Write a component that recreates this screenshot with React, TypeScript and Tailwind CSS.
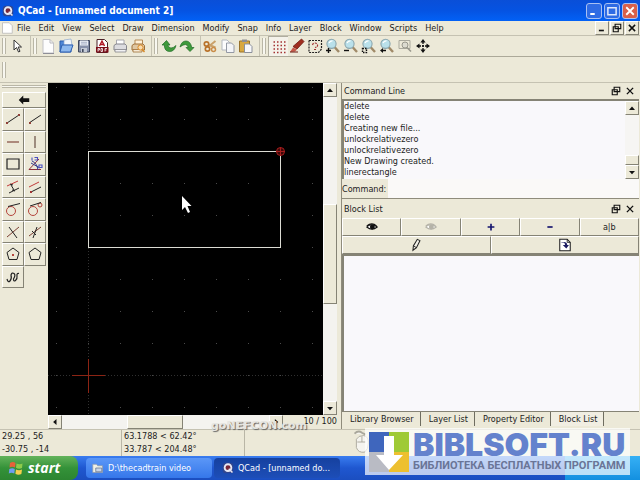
import React, { useState } from "react";

const menus = [
  "File",
  "Edit",
  "View",
  "Select",
  "Draw",
  "Dimension",
  "Modify",
  "Snap",
  "Info",
  "Layer",
  "Block",
  "Window",
  "Scripts",
  "Help",
];

const history = [
  "delete",
  "delete",
  "Creating new file...",
  "unlockrelativezero",
  "unlockrelativezero",
  "New Drawing created.",
  "linerectangle",
];

const tabs = ["Library Browser", "Layer List", "Property Editor", "Block List"];

interface IconProps {
  children: React.ReactNode;
  className?: string;
}

const Icon: React.FC<IconProps> = ({ children, className = "size-4" }) => (
  <svg viewBox="0 0 16 16" className={`${className} shrink-0`} fill="none" aria-hidden="true">
    {children}
  </svg>
);

const Magnifier: React.FC<{ children?: React.ReactNode }> = ({ children }) => (
  <Icon>
    <path d="M9.5 9 L14 14" stroke="#a08a68" strokeWidth="2.4" />
    <circle cx="6.5" cy="5.8" r="4.6" fill="#b9e0ea" stroke="#8aa6ae" strokeWidth="1.1" />
    <path d="M4 5 Q5 2.6 7.5 2.8" stroke="#fff" strokeWidth="1.3" />
    {children}
  </Icon>
);

const QCadLogo = () => (
  <Icon className="size-3">
    <rect x="1" y="1" width="14" height="14" rx="4" fill="#31468f" />
    <circle cx="8" cy="7.5" r="4.5" stroke="#e8e8f4" strokeWidth="2.4" fill="#7a2638" />
    <path d="M9 9 L14 14" stroke="#e8e8f4" strokeWidth="2" />
  </Icon>
);

const pageIcon = (
  <Icon>
    <path d="M3 1.5h7l3.5 3.5v10H3z" fill="#fdfdfd" stroke="#c4c4c8" />
    <path d="M10 1.5V5h3.5" stroke="#b9b9bd" />
    <path d="M3 15.5h11" stroke="#8f8f98" />
  </Icon>
);

const fileTools = [
  { name: "New", icon: pageIcon },
  {
    name: "Open",
    icon: (
      <Icon>
        <path d="M2 3h5l1 2h5v9H2z" fill="#4e86d6" stroke="#2d5fb0" />
        <path d="M6 2l7-1 1 6H6z" fill="#f2f6fc" stroke="#8da6cc" strokeWidth=".7" />
        <path d="M4 7h11l-2.5 7H2z" fill="#8db8ee" stroke="#2d5fb0" />
      </Icon>
    ),
  },
  {
    name: "Save",
    icon: (
      <Icon>
        <path d="M2.5 2.5h11v11.5h-11z" fill="#8791aa" stroke="#3f475c" />
        <path d="M4 2.5h8v5H4z" fill="#e9edf5" />
        <path d="M5 4.3h6M5 6h6" stroke="#9aa5bd" strokeWidth=".8" />
        <path d="M5 10h6v4H5z" fill="#c4cad6" />
        <path d="M6 11h1.6v3H6z" fill="#3f475c" />
      </Icon>
    ),
  },
  {
    name: "Export PDF",
    icon: (
      <Icon>
        <path d="M3 1.5h7.5L13.5 4.5v10H3z" fill="#fff" stroke="#4b2328" />
        <path d="M5.5 8 L8 3l2.5 5M6 6.5h4.5" stroke="#b01622" strokeWidth="1.4" />
        <path d="M2 9h12.5v5.5H2z" fill="#7b0c16" />
        <path d="M4 13.5v-3h1.5v1.5H4M7 10.5v3h1.5v-3zM11 13.5v-3h2M11 12h1.5" stroke="#fff" strokeWidth=".8" />
      </Icon>
    ),
  },
  {
    name: "Print",
    icon: (
      <Icon>
        <path d="M4.5 7V2h7.5v5" fill="#fff" stroke="#a8a8ae" />
        <path d="M2 7.5 L4 6h9l1.5 1.5V12H2z" fill="#dcdce0" stroke="#85858c" />
        <path d="M3 11.5h11v2.5H3z" fill="#f1f1f3" stroke="#85858c" strokeWidth=".8" />
      </Icon>
    ),
  },
  {
    name: "Print preview",
    icon: (
      <Icon>
        <path d="M5 7V2h7.5v5" fill="#fff1d8" stroke="#b48a56" />
        <path d="M2 7.5 L4 6h9l1.5 1.5V12H2z" fill="#dfc7a2" stroke="#a07038" />
        <path d="M3 11.5h9v2.5H3z" fill="#f6ead6" stroke="#a07038" strokeWidth=".8" />
        <circle cx="10.5" cy="9.5" r="2.6" fill="#f9dcb0" stroke="#d98a26" />
        <path d="M12.3 11.5l2.2 2.5" stroke="#d98a26" strokeWidth="1.4" />
      </Icon>
    ),
  },
];

const historyTools = [
  {
    name: "Undo",
    icon: (
      <Icon>
        <path
          d="M1 7 L5.5 2.5 L9 7H6.8q.8 3 3.2 3t5-2.5q-1.500 6-6.500 6T3.3 7z"
          fill="#3f9a3c"
          stroke="#1f6b25"
          strokeWidth=".7"
        />
      </Icon>
    ),
  },
  {
    name: "Redo",
    icon: (
      <Icon>
        <path
          d="M15 9.5 L11 13.5 L7 9.5h2.3q-.8-3-3-3T1 9q1.5-6 6-6t5.7 6.5z"
          fill="#3f9a3c"
          stroke="#1f6b25"
          strokeWidth=".7"
        />
      </Icon>
    ),
  },
];

const clipTools = [
  {
    name: "Cut",
    icon: (
      <Icon>
        <path d="M13.5 3 L6 9M13.5 9.5 L6 6.5" stroke="#c9a06a" strokeWidth="2" />
        <circle cx="4.5" cy="6" r="2.2" stroke="#b9722a" strokeWidth="1.7" />
        <circle cx="5.5" cy="11" r="2.2" stroke="#b9722a" strokeWidth="1.7" />
        <circle cx="11.5" cy="11.5" r="2" stroke="#c98d4a" strokeWidth="1.5" />
      </Icon>
    ),
  },
  {
    name: "Copy",
    icon: (
      <Icon>
        <path d="M2 2h5l2.5 2.5V12H2z" fill="#fcfcfd" stroke="#b4b8c0" />
        <path d="M6.5 5h5l2.5 2.5V14.5H6.5z" fill="#f4f5f8" stroke="#9499a4" />
      </Icon>
    ),
  },
  {
    name: "Paste",
    icon: (
      <Icon>
        <path d="M1.5 3h10v11h-10z" fill="#d9a83f" stroke="#98722a" />
        <path d="M4 1.5h5V4H4z" fill="#8e8e92" />
        <path d="M6.5 6h5l2.5 2.5V14.5H6.5z" fill="#f8f8fa" stroke="#8b909c" />
      </Icon>
    ),
  },
];

const viewTools = [
  {
    name: "Grid",
    icon: (
      <Icon>
        <path
          d="M2.5 3h12M2.5 6.500h12M2.5 10h12M2.5 13.500h12"
          stroke="#a33232"
          strokeWidth="1.5"
          strokeDasharray="1.5 2"
        />
      </Icon>
    ),
  },
  {
    name: "Edit",
    icon: (
      <Icon>
        <path d="M12.500 1l2.500 2.500-7 7.500-4-2.500z" fill="#a02e20" stroke="#6d1a12" strokeWidth=".8" />
        <path d="M4 9.5l4 2-2 2-5 .5z" fill="#c7594a" />
        <path d="M1 14h8" stroke="#6d1a12" />
      </Icon>
    ),
  },
  {
    name: "Draft",
    icon: (
      <Icon>
        <path d="M2 2.5h12.500v8.500l-3 3.500H2z" stroke="#222" strokeDasharray="2 1" strokeWidth="1.2" />
        <path
          d="M5.5 7q.5-2 2.5-2t2.5 2-2.5 2.5M7 11.500h2"
          stroke="#a33232"
          strokeWidth="1.2"
          strokeDasharray="2 1"
        />
      </Icon>
    ),
  },
  {
    name: "Zoom in",
    icon: (
      <Magnifier>
        <path d="M1 12.500h5M3.5 10v5" stroke="#111" strokeWidth="1.400" />
      </Magnifier>
    ),
  },
  {
    name: "Zoom out",
    icon: (
      <Magnifier>
        <path d="M1 12.500h5" stroke="#111" strokeWidth="1.400" />
      </Magnifier>
    ),
  },
  {
    name: "Auto zoom",
    icon: (
      <Magnifier>
        <path d="M1.500 10.500h4v4h-4z" stroke="#111" strokeWidth="1.400" strokeDasharray="1.500 1" />
      </Magnifier>
    ),
  },
  {
    name: "Previous view",
    icon: (
      <Magnifier>
        <path d="M1 12.500 L4 10v5z" fill="#111" />
        <path d="M3 12.500h4" stroke="#111" strokeWidth="1.500" />
      </Magnifier>
    ),
  },
  {
    name: "Zoom window",
    icon: (
      <Icon>
        <path d="M2 2.500h11v8H2z" stroke="#aaa99d" />
        <circle cx="8" cy="7" r="3" fill="#dcdbd0" stroke="#98978c" />
        <path d="M10 9.500l4 4" stroke="#98978c" strokeWidth="1.600" />
      </Icon>
    ),
  },
  {
    name: "Pan",
    icon: (
      <Icon>
        <path
          d="M8 1l2.600 3.500H5.400zM8 15l2.600-3.500H5.400zM1 8l3.500-2.600v5.200zM15 8l-3.500-2.600v5.200z"
          fill="#111"
        />
        <path d="M8 4v8M4 8h8" stroke="#111" strokeWidth="1.300" strokeDasharray="2 1" />
      </Icon>
    ),
  },
];

const lineTools = [
  {
    name: "Line",
    icon: (
      <>
        <path d="M2 12 L14 4" stroke="#222" />
        <path d="M1 11h2v2H1zM13 3h2v2h-2z" fill="#8f4038" />
      </>
    ),
  },
  {
    name: "Line angle",
    icon: (
      <>
        <path d="M2 12 L14 4" stroke="#222" />
        <path d="M2 11h2v2H2z" fill="#8f4038" />
      </>
    ),
  },
  { name: "Horizontal", icon: <path d="M2 8h12" stroke="#7b3d32" strokeWidth="1.100" /> },
  { name: "Vertical", icon: <path d="M8 2v12" stroke="#5d4038" strokeWidth="1.100" /> },
  { name: "Rectangle", icon: <path d="M2 3h12v10H2z" stroke="#222" strokeWidth="1.200" /> },
  {
    name: "Bisector",
    icon: (
      <>
        <path d="M2 13.500 L12 3M2 13.500h12" stroke="#8e2f3a" />
        <path d="M5 5q5 2 6 9M4 7l9 5" stroke="#343a8d" />
        <path d="M5 1.500v3M7.500 1.500h3v2.500h-3M12 9h3v2.500h-3z" stroke="#4a4fc0" strokeWidth="1.100" />
      </>
    ),
  },
  {
    name: "Parallel with distance",
    icon: (
      <>
        <path d="M2 7 L13 2" stroke="#c03a3a" />
        <path d="M4 14 L14 9M6 6l3 5" stroke="#222" />
        <path d="M5 5l3 1M7 11l3 1" stroke="#222" />
      </>
    ),
  },
  {
    name: "Parallel through point",
    icon: (
      <>
        <path d="M2 8 L12 3" stroke="#c03a3a" />
        <path d="M4 13 L14 8" stroke="#222" />
        <path d="M3 12h2v2H3z" fill="#a33232" />
      </>
    ),
  },
  {
    name: "Tangent",
    icon: (
      <>
        <circle cx="6" cy="10" r="4.500" stroke="#b4443c" />
        <path d="M3 5.500 L15 2.500" stroke="#222" />
      </>
    ),
  },
  {
    name: "Tangent two circles",
    icon: (
      <>
        <circle cx="6" cy="10" r="4.500" stroke="#b4443c" />
        <circle cx="13" cy="4" r="2" stroke="#b4443c" />
        <path d="M3 5 L14 1.500" stroke="#222" />
      </>
    ),
  },
  {
    name: "Orthogonal",
    icon: (
      <>
        <path d="M2 13 L14 3" stroke="#7b3d32" />
        <path d="M4 3l8 11" stroke="#222" />
      </>
    ),
  },
  {
    name: "Relative angle",
    icon: (
      <>
        <path d="M2 12 L14 3" stroke="#7b3d32" />
        <path d="M10 3 L6 14M5 7l4 4" stroke="#222" />
      </>
    ),
  },
  {
    name: "Polygon center",
    icon: (
      <>
        <path d="M8 2 L14 6.500 L12 13.500H4L2 6.500z" stroke="#222" />
        <path d="M7 8h2v2H7z" fill="#b4443c" />
      </>
    ),
  },
  { name: "Polygon corner", icon: <path d="M8 2 L14 6.500 L12 13.500H4L2 6.500z" stroke="#222" /> },
  {
    name: "Freehand",
    icon: (
      <path
        d="M2 10q1 4 3 2t1-6q1-3 3-1.500t-.5 5.500q0 3 2 1.500t1.500-4.500 2-2.500"
        stroke="#222"
        strokeWidth="1.200"
      />
    ),
  },
];

const eye = (
  <>
    <path d="M1 8q6-6 14 0-7 6-14 0z" fill="#fff" stroke="currentColor" strokeWidth="1.400" />
    <circle cx="8.500" cy="8" r="3.300" fill="currentColor" />
    <path d="M1 6.500q7-5.500 13 0" stroke="currentColor" strokeWidth="1.600" />
  </>
);

const Handle = () => <span className="mx-0.5 h-4 w-1 border-x border-[#b9b6a6] bg-[#f8f7f0]" />;

const Separator = () => <span className="h-5 w-px bg-[#c5c2b2]" />;

const ToolButton: React.FC<{ name: string; children: React.ReactNode; pressed?: boolean }> = ({
  name,
  children,
  pressed,
}) => (
  <button
    type="button"
    aria-label={name}
    className={`flex h-5 items-center justify-center ${
      pressed ? "w-5 border-t border-l border-[#b0ad9e] bg-[#f4f2ea]" : "w-[18px]"
    }`}
  >
    {children}
  </button>
);

const bevel = "border border-t-white border-l-white border-r-[#858375] border-b-[#858375] bg-[#ece9d8]";

const ScrollButton: React.FC<{ name: string; d: string }> = ({ name, d }) => (
  <button type="button" aria-label={name} className={`flex size-3.5 shrink-0 items-center justify-center ${bevel}`}>
    <Icon className="size-3">
      <path d={d} fill="#111" />
    </Icon>
  </button>
);

const arrows = {
  up: "M8 6l4 4.500h-8z",
  down: "M8 11l4-4.500h-8z",
  left: "M5.500 8l4.500-4v8z",
  right: "M11 8L6.500 4v8z",
};

const WindowGlyphs = () => (
  <span className="flex items-center gap-1 pr-1">
    <button type="button" aria-label="Float" className="size-2.5">
      <Icon className="size-2.5">
        <path d="M5 2h9v7h-9zM2 6h8v8H2z" stroke="#111" strokeWidth="1.800" fill="#ece9d8" />
      </Icon>
    </button>
    <button type="button" aria-label="Close" className="size-2.5">
      <Icon className="size-2.5">
        <path d="M3 3l10 10M13 3L3 13" stroke="#111" strokeWidth="2.200" />
      </Icon>
    </button>
  </span>
);

const Drawing = () => (
  <svg className="min-h-0 min-w-0 flex-1 bg-black" role="img" aria-label="Drawing area">
    <defs>
      <pattern id="grid" x="8" y="4" width="32" height="32" patternUnits="userSpaceOnUse">
        <rect width="1" height="1" fill="#4a4a4a" />
      </pattern>
    </defs>
    <rect width="100%" height="100%" fill="url(#grid)" />
    <path d="M40.500 0V340M0 292.500H275" stroke="#303030" strokeDasharray="1 2" />
    <rect x="40.500" y="68.500" width="192" height="96" stroke="#dcdcd4" fill="none" />
    <path d="M24 292.500h33M40.500 276v34" stroke="#8c2414" />
    <circle cx="232.500" cy="68.500" r="4" fill="#3d0606" stroke="#a51d1d" />
    <path d="M228 68.500h9M232.500 64v9" stroke="#a51d1d" />
    <path d="M134 113v14l3-3 3 6 2-1-2.500-6h4z" fill="#fff" />
  </svg>
);

const CommandDock = () => {
  const [command, setCommand] = useState("");

  return (
    <section className="border-b border-[#8f8c7c]">
      <header className="flex h-4 items-center justify-between pl-0.5">
        <h2>Command Line</h2>
        <WindowGlyphs />
      </header>
      <div className="flex h-20 border-t-2 border-l-2 border-[#858375] bg-[#f9f8fb]">
        <ul className="flex-1 leading-[11px]">
          {history.map((line, i) => (
            <li key={i}>{line}</li>
          ))}
        </ul>
        <div className="flex w-3.5 flex-col bg-[#f6f5f3]">
          <ScrollButton name="Scroll up" d={arrows.up} />
          <div className="flex-1" />
          <div className={`h-2.5 ${bevel}`} />
          <ScrollButton name="Scroll down" d={arrows.down} />
        </div>
      </div>
      <div className="flex h-[19px] items-stretch">
        <label htmlFor="command" className="flex w-[46px] items-center">
          Command:
        </label>
        <input
          id="command"
          value={command}
          onChange={(e) => setCommand(e.target.value)}
          className="min-w-0 flex-1 bg-[#faf9f8] px-1 outline-none"
        />
      </div>
    </section>
  );
};

const blockButton = `flex h-[18px] flex-1 items-center justify-center ${bevel}`;

const BlockDock = () => (
  <section className="flex min-h-0 flex-1 flex-col">
    <header className="flex h-[19px] items-center justify-between pl-0.5">
      <h2>Block List</h2>
      <WindowGlyphs />
    </header>
    <div className="flex">
      <button type="button" aria-label="Show all blocks" className={`${blockButton} text-[#111]`}>
        <Icon className="size-3">{eye}</Icon>
      </button>
      <button type="button" aria-label="Hide all blocks" className={`${blockButton} text-[#b5b3a8]`}>
        <Icon className="size-3">{eye}</Icon>
      </button>
      <button type="button" aria-label="Add block" className={blockButton}>
        <Icon className="size-3">
          <path d="M3.500 8h9M8 3.500v9" stroke="#14146e" strokeWidth="2.200" />
        </Icon>
      </button>
      <button type="button" aria-label="Remove block" className={blockButton}>
        <Icon className="size-3">
          <path d="M4.500 8h7" stroke="#14146e" strokeWidth="2.200" />
        </Icon>
      </button>
      <button type="button" className={blockButton}>
        a|b
      </button>
    </div>
    <div className="flex">
      <button type="button" aria-label="Edit block" className={blockButton}>
        <Icon className="size-3.5">
          <path d="M5 9l4.500-7.500 3 1.500L8.500 11 4.500 14z" fill="#f4f2ea" stroke="#222" strokeWidth="1.200" />
          <path d="M5 9l3.500 2" stroke="#222" />
        </Icon>
      </button>
      <button type="button" aria-label="Insert block" className={blockButton}>
        <Icon className="size-3.5">
          <path d="M2 1.500h8.500L14 5v9.500H2z" fill="#fff" stroke="#222" strokeWidth="1.200" />
          <path d="M10.500 1.500V5H14" stroke="#222" />
          <path d="M3 5q5-1 5 3h-2.500l4 4 3-4H10.500q0-5-7.500-3z" fill="#1b1b62" />
        </Icon>
      </button>
    </div>
    <div className="min-h-0 flex-1 border-t-2 border-l-2 border-[#858375] bg-[#f9f8fb]" />
    <nav className="flex h-[18px] items-start border-t border-[#858375]">
      {tabs.map((tab) => (
        <button
          key={tab}
          type="button"
          className={`h-3.5 border-r border-[#6f6d60] pr-1.5 pl-2 whitespace-nowrap ${
            tab === "Block List" ? "bg-[#f1eee2]" : ""
          }`}
        >
          {tab}
        </button>
      ))}
    </nav>
  </section>
);

const captionButton = "flex size-4 items-center justify-center rounded-[3px] border border-[#a9c0f2]";
const documentButton = `flex size-3.5 items-center justify-center ${bevel}`;

const App: React.FC = () => {
  return (
    <div className="relative flex h-screen flex-col overflow-hidden bg-[#ece9d8] font-['DejaVu_Sans_Condensed','DejaVu_Sans',sans-serif] text-[9px] leading-3 text-[#1c1c1c]">
      <header className="flex h-[21px] shrink-0 items-center gap-1 bg-linear-to-b from-[#0a4fd8] via-[#0553e2] to-[#0261f6] pr-0.5 pl-0.5">
        <QCadLogo />
        <h1 className="flex-1 text-[10px] font-bold text-white">QCad - [unnamed document 2]</h1>
        <div className="flex gap-0.5">
          <button type="button" aria-label="Minimize" className={`${captionButton} bg-[#2f6be4]`}>
            <Icon className="size-3">
              <path d="M3 12h6" stroke="#fff" strokeWidth="2.600" />
            </Icon>
          </button>
          <button type="button" aria-label="Maximize" className={`${captionButton} bg-[#2f6be4]`}>
            <Icon className="size-3">
              <path d="M2.500 3.500h11v9.500h-11z" stroke="#dfe8fc" strokeWidth="2" />
            </Icon>
          </button>
          <button type="button" aria-label="Close" className={`${captionButton} bg-[#d8604a]`}>
            <Icon className="size-3">
              <path d="M3 3l10 10M13 3L3 13" stroke="#fff" strokeWidth="2.400" />
            </Icon>
          </button>
        </div>
      </header>

      <div className="flex h-[15px] shrink-0 items-center border-b border-[#c5c2b2] pl-px">
        <Icon className="size-3">
          <path d="M2 1h9l4 4v10H2z" fill="#fff" stroke="#b4b4b4" />
        </Icon>
        <nav className="flex flex-1 gap-2 pl-1">
          {menus.map((menu) => (
            <button key={menu} type="button">
              {menu}
            </button>
          ))}
        </nav>
        <div className="flex gap-px pr-px">
          <button type="button" aria-label="Minimize document" className={documentButton}>
            <Icon className="size-2.5">
              <path d="M3 12h8" stroke="#111" strokeWidth="2.600" />
            </Icon>
          </button>
          <button type="button" aria-label="Restore document" className={documentButton}>
            <Icon className="size-2.5">
              <path d="M5 2h9v7h-9zM2 6h8v8H2z" stroke="#111" strokeWidth="1.800" fill="#ece9d8" />
            </Icon>
          </button>
          <button type="button" aria-label="Close document" className={documentButton}>
            <Icon className="size-2.5">
              <path d="M3 3l10 10M13 3L3 13" stroke="#111" strokeWidth="2.400" />
            </Icon>
          </button>
        </div>
      </div>

      <div className="flex h-[21px] shrink-0 items-center border-b border-[#aca999]">
        <Handle />
        <div className="flex pr-1">
          <ToolButton name="Select">
            <Icon>
              <path d="M5 2v10l2.500-2.500L9.500 14l1.500-.7L9.200 9H12.500z" fill="#fff" stroke="#333" />
            </Icon>
          </ToolButton>
        </div>
        <Separator />
        <Handle />
        <div className="flex pr-1">
          {fileTools.map((tool) => (
            <ToolButton key={tool.name} name={tool.name}>
              {tool.icon}
            </ToolButton>
          ))}
        </div>
        <Separator />
        <Handle />
        <div className="flex pr-1">
          {historyTools.map((tool) => (
            <ToolButton key={tool.name} name={tool.name}>
              {tool.icon}
            </ToolButton>
          ))}
        </div>
        <Separator />
        <div className="flex pr-1">
          {clipTools.map((tool) => (
            <ToolButton key={tool.name} name={tool.name}>
              {tool.icon}
            </ToolButton>
          ))}
        </div>
        <Separator />
        <Handle />
        {viewTools.map((tool) => (
          <ToolButton key={tool.name} name={tool.name} pressed={tool.name === "Grid"}>
            {tool.icon}
          </ToolButton>
        ))}
      </div>

      <div className="flex h-[26px] shrink-0 items-center border-b border-[#c5c2b2]">
        <Handle />
      </div>

      <main className="flex min-h-0 flex-1">
        <aside className="w-12 shrink-0 px-0.5 pt-0.5">
          <div className="mb-1 h-[3px] border-y border-[#b9b6a6] bg-[#f8f7f0]" />
          <button type="button" aria-label="Back" className={`flex h-4 w-11 items-center justify-center ${bevel}`}>
            <Icon className="size-3">
              <path d="M1 8l6-6v3.500h8v5H7V14z" fill="#111" />
            </Icon>
          </button>
          <div className="grid h-45 w-11 grid-cols-2 grid-rows-8">
            {lineTools.map((tool) => (
              <button
                key={tool.name}
                type="button"
                aria-label={tool.name}
                className={`flex items-center justify-center ${bevel}`}
              >
                <Icon>{tool.icon}</Icon>
              </button>
            ))}
          </div>
        </aside>

        <div className="flex min-w-0 flex-1 flex-col">
          <div className="flex min-h-0 flex-1">
            <Drawing />
            <div className="flex w-3.5 shrink-0 flex-col bg-[#f4f3ef]">
              <ScrollButton name="Scroll up" d={arrows.up} />
              <div className="flex-11" />
              <div className={`flex-10 ${bevel}`} />
              <div className="flex-10" />
              <ScrollButton name="Scroll down" d={arrows.down} />
            </div>
          </div>
          <div className="flex h-3.5 shrink-0">
            <div className="flex min-w-0 flex-1 bg-[#f4f3ef]">
              <ScrollButton name="Scroll left" d={arrows.left} />
              <div className="flex-6" />
              <div className={`flex-5 ${bevel}`} />
              <div className="flex-8" />
              <ScrollButton name="Scroll right" d={arrows.right} />
            </div>
            <span className="w-[54px] text-right">10 / 100</span>
          </div>
        </div>

        <div className="ml-1 flex w-[299px] shrink-0 flex-col border-l border-[#8f8c7c] pr-px">
          <CommandDock />
          <BlockDock />
        </div>
      </main>

      <footer className="flex h-[27px] shrink-0 border-t border-[#c5c2b2] leading-[13px]">
        <div className="w-[121px] pl-0.5">
          <p>29.25 , 56</p>
          <p>-30.75 , -14</p>
        </div>
        <div className="w-[121px] border-l border-[#b9b6a6] pl-0.5">
          <p>63.1788 &lt; 62.42°</p>
          <p>33.787 &lt; 204.48°</p>
        </div>
        <div className="ml-0.5 flex-1 border-l border-[#b9b6a6] pl-[108px]">
          <svg viewBox="0 0 16 26" className="h-6 w-4" fill="#f5f4ef" stroke="#a9a79b" aria-hidden="true">
            <path d="M1 4q4-4 8-1l4 2" strokeWidth="2" />
            <path d="M3 10q2-4 8-4 5 1 5 8t-4 10q-7 1-9-5z" />
            <path d="M9 7v6M4 13h9" />
          </svg>
        </div>
      </footer>

      <footer className="flex h-6 shrink-0 items-stretch bg-linear-to-b from-[#3a7df0] via-[#1f57d0] to-[#1b4ec0] text-white">
        <button
          type="button"
          className="flex w-[78px] items-center gap-1 rounded-r-lg bg-linear-to-b from-[#63b35b] via-[#349239] to-[#2c8531] pl-2 font-['Open_Sans',sans-serif] text-[14px] font-bold italic"
        >
          <Icon>
            <path d="M2 3q3-2 5.500 0L7 7.500q-3-1.500-5.500 0z" fill="#e8613a" />
            <path d="M8.500 3.500q3 1.500 6 0L14 8q-3 1.500-6-.2z" fill="#8ecb4b" />
            <path d="M1.300 9q3-1.500 5.500 0L6.300 13.500q-3-1.500-5.500 0z" fill="#6f9df0" />
            <path d="M8 9.500q3 1.500 6 0L13.400 14q-3 1.500-6-.2z" fill="#f5cf4c" />
          </Icon>
          start
        </button>
        <button
          type="button"
          className="my-0.5 ml-2 flex w-[126px] items-center gap-1 rounded-sm bg-linear-to-b from-[#5b97f7] to-[#3577ea] pl-1.5"
        >
          <Icon className="size-3">
            <path d="M1 3h5l1.500 2H14v9H1z" fill="#f1f1e6" stroke="#8e99ae" />
            <path d="M5 8h8v5H5z" fill="#c9d5e8" stroke="#60708c" />
          </Icon>
          D:\thecadtrain video
        </button>
        <button
          type="button"
          className="my-0.5 ml-0.5 flex w-[126px] items-center gap-1 rounded-sm bg-linear-to-b from-[#16419f] to-[#1d4eb8] pl-2"
        >
          <QCadLogo />
          QCad - [unnamed do...
        </button>
        <div className="ml-auto w-[75px] bg-linear-to-b from-[#35b0f5] to-[#1290e0]" />
      </footer>

      {/* site watermarks floating over the desktop */}
      <div className="absolute bottom-12 left-[211px] font-['DejaVu_Sans',sans-serif] text-[11px] font-bold text-[#e6e6e2] [text-shadow:1px_1px_1px_#666]">
        goNEFCON.com
      </div>
      <div className="absolute right-2.5 bottom-[5px] flex h-[47px] w-[265px] items-center gap-1 bg-white/70 pl-1">
        <svg viewBox="0 0 40 40" className="size-10 shrink-0" aria-hidden="true">
          <path d="M0 0h20v20H0z" fill="#3f66bd" />
          <path d="M20 0h20v20H20z" fill="#9fca35" />
          <path d="M0 20h20v20H0z" fill="#b9bbc4" />
          <path d="M20 20h20v20H20z" fill="#edc02f" />
          <path d="M15 4h10v19h9L20 38 7 23h8z" fill="#fff" />
        </svg>
        <div className="whitespace-nowrap">
          <p className="font-['Inter','Lato',sans-serif] text-[32px] leading-7 font-black text-[#6482cd]">BIBLSOFT.RU</p>
          <p className="font-['Liberation_Sans_Narrow','Roboto',sans-serif] text-[11px] leading-[14px] font-bold text-[#6a7597]">
            БИБЛИОТЕКА БЕСПЛАТНЫХ ПРОГРАММ
          </p>
        </div>
      </div>
    </div>
  );
};

export default App;
